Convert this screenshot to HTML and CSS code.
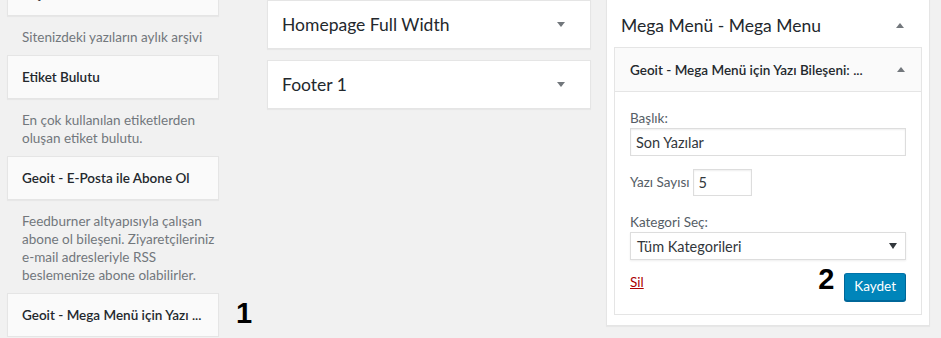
FILE: index.html
```html
<!DOCTYPE html>
<html lang="tr">
<head>
    <meta charset="UTF-8">
    <title>Bileşenler</title>
    <link rel="stylesheet" href="styles.css">
</head>
<body>
    <div class="screen">
        <!-- Kullanılabilir bileşenler -->
        <div class="col col-left">
            <div class="widget-top"><h3>Arşivler</h3></div>
            <p class="widget-desc">Sitenizdeki yazıların aylık arşivi</p>

            <div class="widget-top"><h3>Etiket Bulutu</h3></div>
            <p class="widget-desc">En çok kullanılan etiketlerden<br>oluşan etiket bulutu.</p>

            <div class="widget-top"><h3>Geoit - E-Posta ile Abone Ol</h3></div>
            <p class="widget-desc">Feedburner altyapısıyla çalışan<br>abone ol bileşeni. Ziyaretçileriniz<br>e-mail adresleriyle RSS<br>beslemenize abone olabilirler.</p>

            <div class="widget-top marked">
                <h3>Geoit - Mega Menü için Yazı ...</h3>
                <span class="step step-side">1</span>
            </div>
        </div>

        <!-- Bileşen alanları -->
        <div class="col col-mid">
            <div class="sidebar">
                <div class="sidebar-name">
                    <h2>Homepage Full Width</h2>
                    <span class="arrow down"></span>
                </div>
            </div>
            <div class="sidebar">
                <div class="sidebar-name">
                    <h2>Footer 1</h2>
                    <span class="arrow down"></span>
                </div>
            </div>
        </div>

        <div class="col col-right">
            <div class="sidebar open">
                <div class="sidebar-name">
                    <h2>Mega Menü - Mega Menu</h2>
                    <span class="arrow up"></span>
                </div>
                <div class="widget">
                    <div class="widget-head">
                        <h3>Geoit - Mega Menü için Yazı Bileşeni: ...</h3>
                        <span class="arrow up"></span>
                    </div>
                    <div class="widget-inside">
                        <div class="field">
                            <label>Başlık:</label>
                            <input type="text" class="input wide" value="Son Yazılar">
                        </div>
                        <div class="field inline">
                            <label>Yazı Sayısı</label>
                            <input type="text" class="input small" value="5">
                        </div>
                        <div class="field">
                            <label>Kategori Seç:</label>
                            <div class="select">
                                <span>Tüm Kategorileri</span>
                                <span class="select-arrow"></span>
                            </div>
                        </div>
                        <div class="controls">
                            <a href="#" class="delete">Sil</a>
                            <span class="step step-save">2</span>
                            <button class="button-primary">Kaydet</button>
                        </div>
                    </div>
                </div>
            </div>
        </div>
    </div>
</body>
</html>
```

FILE: styles.css
```css
/* Genel */
body {
    margin: 0;
    background: #f1f1f1;
    font-family: Lato, "Open Sans", sans-serif;
    font-size: 13.5px;
    color: #444;
    overflow: hidden;
}

.screen {
    display: flex;
    align-items: flex-start;
    padding-left: 7px;
}

.col-left {
    width: 212px;
    margin-top: -28px;
}

.col-mid {
    width: 324px;
    margin-left: 48px;
    display: flex;
    flex-direction: column;
    gap: 11px;
}

.col-right {
    width: 324px;
    margin-left: 15px;
    margin-top: -1px;
}

/* Sol sütun bileşenleri */
.widget-top {
    background: #fafafa;
    border: 1px solid #e5e5e5;
    box-shadow: 0 1px 1px rgba(0, 0, 0, 0.04);
    height: 42px;
    display: flex;
    align-items: center;
    padding: 0 14px;
    position: relative;
}

.widget-top h3 {
    margin: 0;
    font-size: 13.5px;
    font-weight: 600;
    color: #23282d;
    white-space: nowrap;
}

.widget-desc {
    margin: 0;
    padding: 12px 0 9px 15px;
    line-height: 18px;
    color: #72777c;
    white-space: nowrap;
}

/* Bileşen alanları */
.sidebar {
    background: #fff;
    border: 1px solid #e5e5e5;
    box-shadow: 0 1px 1px rgba(0, 0, 0, 0.04);
}

.sidebar-name {
    height: 47px;
    display: flex;
    align-items: center;
    justify-content: space-between;
    padding: 0 25px 0 14px;
}

.sidebar-name h2 {
    margin: 0;
    font-size: 17.5px;
    font-weight: 400;
    color: #23282d;
}

.sidebar.open .sidebar-name {
    height: 44px;
    padding-top: 3px;
}

.arrow {
    width: 0;
    height: 0;
    border-left: 4px solid transparent;
    border-right: 4px solid transparent;
}

.arrow.down {
    border-top: 5px solid #72777c;
}

.arrow.up {
    border-bottom: 5px solid #72777c;
}

/* Açık bileşen */
.widget {
    margin: 0 7px 10px;
    border: 1px solid #e5e5e5;
    background: #fff;
}

.widget-head {
    height: 43px;
    background: #fafafa;
    border-bottom: 1px solid #e5e5e5;
    display: flex;
    align-items: center;
    justify-content: space-between;
    padding: 0 16px 0 15px;
}

.widget-head h3 {
    margin: 0;
    font-size: 13.5px;
    font-weight: 600;
    color: #23282d;
    white-space: nowrap;
}

.widget-inside {
    padding: 17px 15px 13px;
}

.field {
    margin-bottom: 13px;
}

.field label {
    display: block;
    line-height: 19px;
    color: #555d66;
}

.field.inline {
    display: flex;
    align-items: center;
    gap: 3px;
    margin-bottom: 17px;
}

.field.inline label {
    display: inline;
}

.input {
    box-sizing: border-box;
    height: 28px;
    border: 1px solid #ddd;
    box-shadow: inset 0 1px 2px rgba(0, 0, 0, 0.07);
    background: #fff;
    color: #32373c;
    font-family: Lato, "Open Sans", sans-serif;
    font-size: 14.5px;
    padding: 2px 5px;
    outline: none;
}

.input.wide {
    width: 100%;
}

.input.small {
    width: 59px;
    height: 27px;
}

.select {
    box-sizing: border-box;
    height: 28px;
    border: 1px solid #ddd;
    box-shadow: 0 1px 2px rgba(0, 0, 0, 0.07);
    background: #fff;
    color: #32373c;
    font-size: 14.5px;
    display: flex;
    align-items: center;
    justify-content: space-between;
    padding: 0 8px 0 6px;
}

.select-arrow {
    width: 0;
    height: 0;
    border-left: 4px solid transparent;
    border-right: 4px solid transparent;
    border-top: 6px solid #32373c;
}

.controls {
    display: flex;
    align-items: flex-start;
    gap: 10px;
}

.delete {
    color: #a00;
    margin-right: auto;
    margin-top: 1px;
}

.button-primary {
    height: 28px;
    padding: 0 9px 2px;
    background: #0085ba;
    border: 1px solid #0073aa;
    border-color: #0073aa #006799 #006799;
    border-radius: 3px;
    box-shadow: 0 1px 0 #006799;
    color: #fff;
    font-family: Lato, "Open Sans", sans-serif;
    font-size: 13.5px;
    cursor: pointer;
}

/* Numaralı işaretler */
.step {
    font-family: "Liberation Sans", Arial, sans-serif;
    font-weight: bold;
    font-size: 29px;
    color: #000;
    line-height: 1;
}

.step-save {
    margin-top: -8px;
}

.step-side {
    position: absolute;
    left: calc(100% + 18px);
    top: 5px;
}
```
